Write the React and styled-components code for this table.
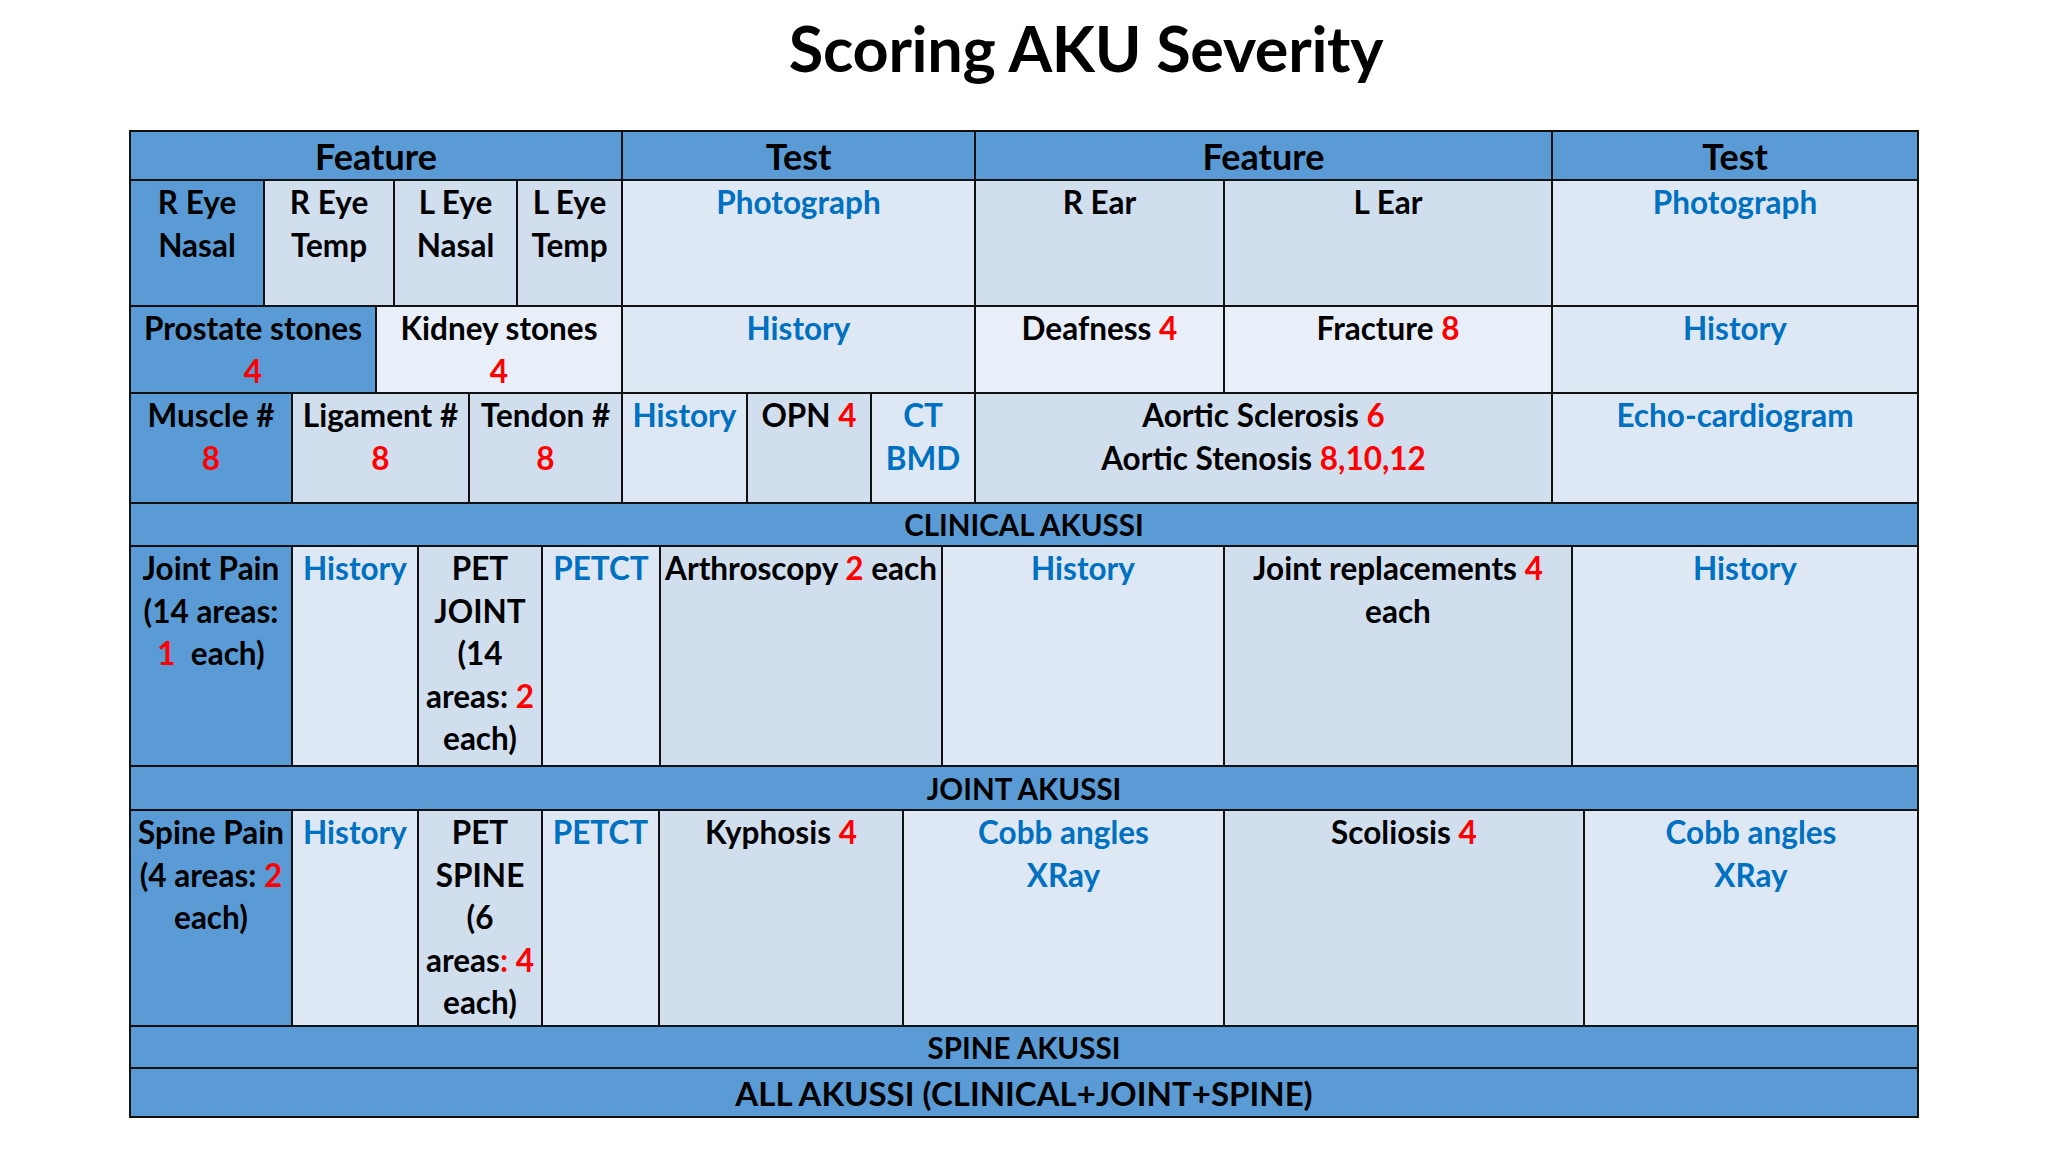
import React from 'react';
import styled, { createGlobalStyle } from 'styled-components';

const GlobalStyle = createGlobalStyle`
	html, body {
		margin: 0;
		padding: 0;
		background: #ffffff;
	}
	body {
		font-family: Lato, 'Open Sans', 'Liberation Sans', sans-serif;
		font-weight: 700;
		color: #000000;
	}
`;

const tones = {
	dark: '#5b9bd5',
	mid: '#d0deee',
	light: '#dee8f5',
	pale: '#e9eff8'
};

const Page = styled.div`
	width: 2048px;
	height: 1152px;
	display: flex;
	flex-direction: column;
	align-items: center;
`;

const Title = styled.h1`
	box-sizing: border-box;
	height: 130px;
	margin: 0;
	padding: 16px 0 0 124px;
	font-size: 63px;
	line-height: 63px;
	font-weight: 700;
	letter-spacing: -0.3px;
`;

const Table = styled.div`
	box-sizing: border-box;
	width: 1790px;
	display: flex;
	flex-direction: column;
	border: 2px solid #111;
`;

const Row = styled.div`
	box-sizing: border-box;
	display: grid;
	grid-template-columns: ${props => props.cols};
	height: ${props => props.h}px;

	& + & {
		border-top: 2px solid #111;
	}
`;

const Cell = styled.div`
	box-sizing: border-box;
	background: ${props => tones[props.tone || 'mid']};
	font-size: 31.5px;
	line-height: 42.5px;
	text-align: center;
	white-space: nowrap;
	overflow: hidden;

	& + & {
		border-left: 2px solid #111;
	}
`;

const HeadCell = styled(Cell)`
	background: ${tones.dark};
	font-size: 36px;
	line-height: 1;
	display: flex;
	align-items: center;
	justify-content: center;
`;

const Band = styled.div`
	background: ${tones.dark};
	font-size: ${props => (props.big ? 33 : 29.5)}px;
	display: flex;
	align-items: center;
	justify-content: center;
	white-space: nowrap;
`;

const Red = styled.span`
	color: #ff0000;
`;

const Blue = styled.span`
	color: #0070c0;
`;

function cols(widths) {
	return widths.map(w => `${w}px`).join(' ');
}

export default function App() {
	return (
		<Page>
			<GlobalStyle />
			<Title>Scoring AKU Severity</Title>
			<Table>
				<Row h={47} cols={cols([490, 353, 577, 366])}>
					<HeadCell>Feature</HeadCell>
					<HeadCell>Test</HeadCell>
					<HeadCell>Feature</HeadCell>
					<HeadCell>Test</HeadCell>
				</Row>

				<Row h={126} cols={cols([132, 130, 123, 105, 353, 249, 328, 366])}>
					<Cell tone="dark">R Eye<br />Nasal</Cell>
					<Cell>R Eye<br />Temp</Cell>
					<Cell>L Eye<br />Nasal</Cell>
					<Cell>L Eye<br />Temp</Cell>
					<Cell tone="light"><Blue>Photograph</Blue></Cell>
					<Cell>R Ear</Cell>
					<Cell>L Ear</Cell>
					<Cell tone="light"><Blue>Photograph</Blue></Cell>
				</Row>

				<Row h={87} cols={cols([244, 246, 353, 249, 328, 366])}>
					<Cell tone="dark">Prostate stones<br /><Red>4</Red></Cell>
					<Cell tone="pale">Kidney stones<br /><Red>4</Red></Cell>
					<Cell tone="light"><Blue>History</Blue></Cell>
					<Cell tone="pale">Deafness <Red>4</Red></Cell>
					<Cell tone="pale">Fracture <Red>8</Red></Cell>
					<Cell tone="light"><Blue>History</Blue></Cell>
				</Row>

				<Row h={110} cols={cols([160, 177, 153, 125, 124, 104, 577, 366])}>
					<Cell tone="dark">Muscle #<br /><Red>8</Red></Cell>
					<Cell>Ligament #<br /><Red>8</Red></Cell>
					<Cell>Tendon #<br /><Red>8</Red></Cell>
					<Cell tone="light"><Blue>History</Blue></Cell>
					<Cell>OPN <Red>4</Red></Cell>
					<Cell tone="light"><Blue>CT<br />BMD</Blue></Cell>
					<Cell>
						Aortic Sclerosis <Red>6</Red>
						<br />
						Aortic Stenosis <Red>8,10,12</Red>
					</Cell>
					<Cell tone="light"><Blue>Echo-cardiogram</Blue></Cell>
				</Row>

				<Row h={43} cols="1fr">
					<Band>CLINICAL AKUSSI</Band>
				</Row>

				<Row h={220} cols={cols([160, 126, 124, 118, 282, 282, 348, 346])}>
					<Cell tone="dark">
						Joint Pain<br />(14 areas:<br /><Red>1</Red>&nbsp; each)
					</Cell>
					<Cell tone="light"><Blue>History</Blue></Cell>
					<Cell>
						PET<br />JOINT<br />(14<br />areas: <Red>2</Red><br />each)
					</Cell>
					<Cell tone="light"><Blue>PETCT</Blue></Cell>
					<Cell>Arthroscopy <Red>2</Red> each</Cell>
					<Cell tone="light"><Blue>History</Blue></Cell>
					<Cell>Joint replacements <Red>4</Red><br />each</Cell>
					<Cell tone="light"><Blue>History</Blue></Cell>
				</Row>

				<Row h={44} cols="1fr">
					<Band>JOINT AKUSSI</Band>
				</Row>

				<Row h={216} cols={cols([160, 126, 124, 117, 244, 321, 360, 334])}>
					<Cell tone="dark">
						Spine Pain<br />(4 areas: <Red>2</Red><br />each)
					</Cell>
					<Cell tone="light"><Blue>History</Blue></Cell>
					<Cell>
						PET<br />SPINE<br />(6<br />areas<Red>: 4</Red><br />each)
					</Cell>
					<Cell tone="light"><Blue>PETCT</Blue></Cell>
					<Cell>Kyphosis <Red>4</Red></Cell>
					<Cell tone="light"><Blue>Cobb angles<br />XRay</Blue></Cell>
					<Cell>Scoliosis <Red>4</Red></Cell>
					<Cell tone="light"><Blue>Cobb angles<br />XRay</Blue></Cell>
				</Row>

				<Row h={42} cols="1fr">
					<Band>SPINE AKUSSI</Band>
				</Row>

				<Row h={49} cols="1fr">
					<Band big>ALL AKUSSI (CLINICAL+JOINT+SPINE)</Band>
				</Row>
			</Table>
		</Page>
	);
}
